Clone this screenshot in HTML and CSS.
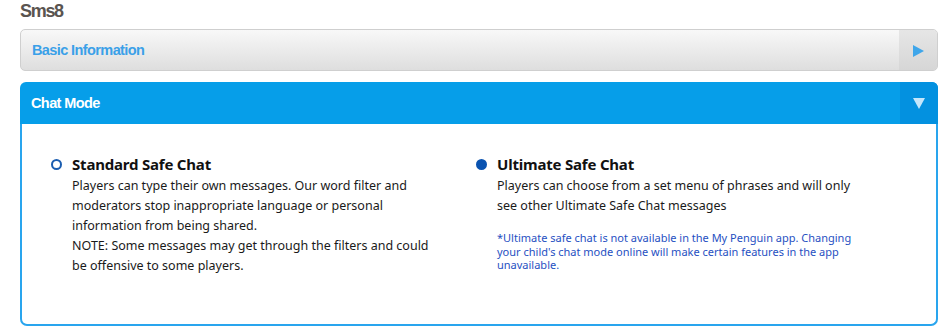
FILE: index.html
```html
<!DOCTYPE html>
<html>
<head>
<meta charset="utf-8">
<link rel="stylesheet" href="styles.css">
</head>
<body>
<div class="page">
  <h1 class="title">Sms8</h1>
  <div class="bar bar-closed">
    <span class="bar-label">Basic Information</span>
    <span class="bar-toggle"><svg width="11" height="12" viewBox="0 0 11 12"><polygon points="0,0 11,6 0,12" fill="#3fa6ea"/></svg></span>
  </div>
  <div class="panel">
    <div class="bar bar-open">
      <span class="bar-label">Chat Mode</span>
      <span class="bar-toggle"><svg width="12" height="11" viewBox="0 0 12 11"><polygon points="0,0 12,0 6,11" fill="#c4e6fb"/></svg></span>
    </div>
    <div class="panel-body">
      <div class="option">
        <span class="radio"></span>
        <div class="option-text">
          <div class="option-title">Standard Safe Chat</div>
          <p class="option-desc">Players can type their own messages. Our word filter and moderators stop inappropriate language or personal information from being shared.<br>NOTE: Some messages may get through the filters and could be offensive to some players.</p>
        </div>
      </div>
      <div class="option">
        <span class="radio radio-on"></span>
        <div class="option-text">
          <div class="option-title">Ultimate Safe Chat</div>
          <p class="option-desc">Players can choose from a set menu of phrases and will only see other Ultimate Safe Chat messages</p>
          <p class="option-note">*Ultimate safe chat is not available in the My Penguin app. Changing your child's chat mode online will make certain features in the app unavailable.</p>
        </div>
      </div>
    </div>
  </div>
</div>
</body>
</html>
```
FILE: styles.css
```css
html, body { margin: 0; padding: 0; background: #fff; }
.page {
  padding: 0 9px 0 20px;
  font-family: "Noto Sans", "Open Sans", sans-serif;
}
.title {
  margin: 0;
  height: 29px;
  font-family: "Liberation Sans", Arial, sans-serif;
  font-size: 18px;
  font-weight: bold;
  line-height: 22px;
  color: #5a5450;
  letter-spacing: -1.3px;
}
.bar {
  display: flex;
  align-items: stretch;
  box-sizing: border-box;
}
.bar-label {
  flex: 1;
  display: flex;
  align-items: center;
  padding-left: 11px;
  font-family: "Liberation Sans", Arial, sans-serif;
  font-size: 14.5px;
  font-weight: bold;
  letter-spacing: -0.6px;
}
.bar-toggle {
  width: 38px;
  display: flex;
  align-items: center;
  justify-content: center;
}
.bar-closed {
  height: 42px;
  border: 1px solid #cfcfcf;
  border-radius: 5px;
  background: linear-gradient(#f8f8f8, #dedede);
}
.bar-closed .bar-label { color: #3aa0e8; }
.bar-closed .bar-toggle {
  background: linear-gradient(#e6e6e6, #d6d6d6);
  border-radius: 0 4px 4px 0;
  padding-top: 1px;
}
.panel { margin-top: 11px; }
.bar-open {
  height: 42px;
  background: #069ee9;
  border-radius: 6px 6px 0 0;
}
.bar-open .bar-label { color: #fff; }
.bar-open .bar-toggle {
  background: #0391e0;
  border-radius: 0 6px 0 0;
}
.panel-body {
  box-sizing: border-box;
  height: 202px;
  border: 2px solid #29a5ee;
  border-top: none;
  border-radius: 0 0 7px 7px;
  display: flex;
  padding: 31px 0 0 29px;
}
.option {
  display: flex;
  gap: 10px;
  width: 425px;
}
.option + .option { width: auto; flex: 1; }
.radio {
  flex: none;
  box-sizing: border-box;
  width: 11px;
  height: 11px;
  margin-top: 4px;
  border: 2.5px solid #1a5db0;
  border-radius: 50%;
}
.radio-on {
  background: #0a53b0;
  border-color: #0a53b0;
}
.option-text { width: 370px; }
.option-title {
  font-size: 15px;
  font-weight: bold;
  line-height: 18px;
  margin-bottom: 3px;
  color: #111;
  letter-spacing: -0.2px;
}
.option-desc {
  margin: 0;
  font-size: 12.5px;
  line-height: 20px;
  color: #1a1a1a;
}
.option-note {
  margin: 15px 0 0;
  font-size: 11px;
  line-height: 13.5px;
  color: #1f50c2;
  width: 362px;
}
```
